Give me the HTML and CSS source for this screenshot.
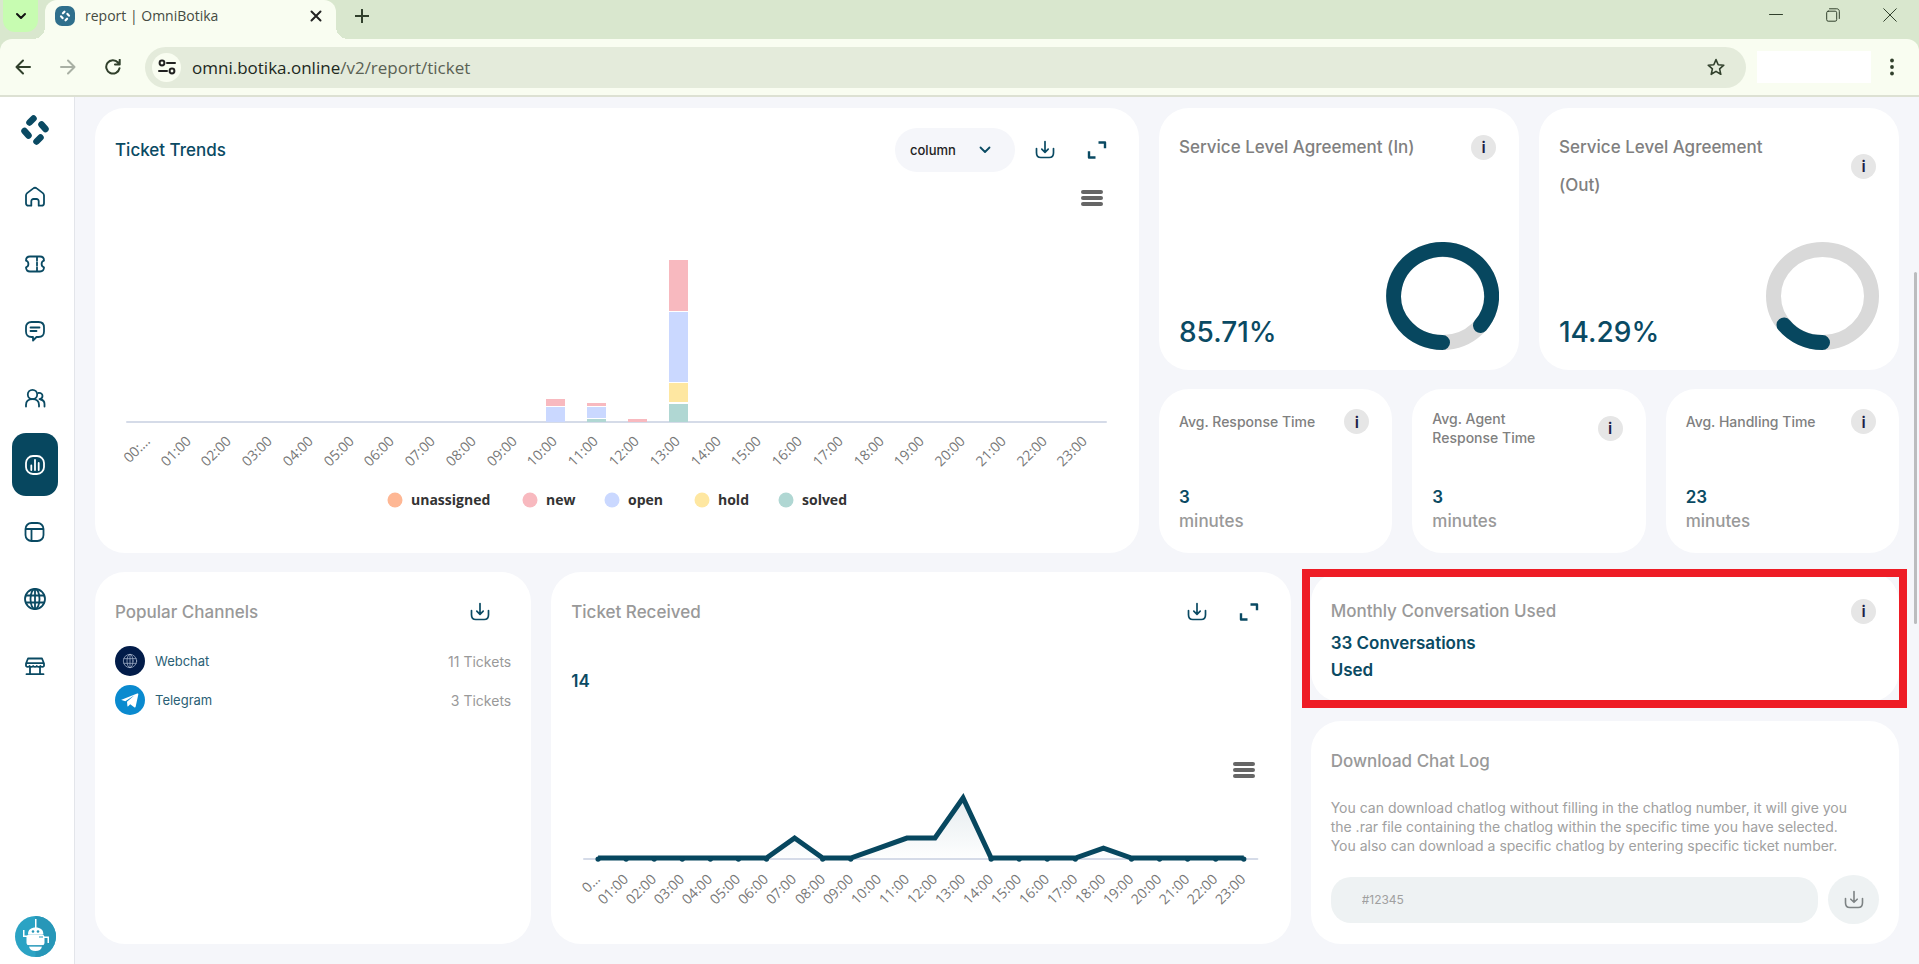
FILE: index.html
```html
<!DOCTYPE html>
<html lang="en">
<head>
<meta charset="utf-8">
<title>report | OmniBotika</title>
<link rel="stylesheet" href="styles.css">
</head>
<body>
<svg class="sprite" aria-hidden="true">
  <symbol id="download" viewBox="0 0 20 20"><path d="M10 1.500v10.500M6.800 9.200 10 12.300l3.200-3.100M1.500 8.500v4.200c0 3 1.300 4.800 4.300 4.800h8.400c3 0 4.300-1.800 4.300-4.800V8.500"/></symbol>
  <symbol id="expand" viewBox="0 0 20 20"><path d="M11.500 2.500H18v5.800M2 11.200v6.300h6.500"/></symbol>
  <symbol id="brand" viewBox="0 0 32 32"><path d="M10.500 8.500 14.500 4.500M22.500 10.500l4 4.500M21.500 23.500l-4 4M9.500 21.500l-4-4.500"/></symbol>
  <symbol id="globe" viewBox="0 0 24 24"><circle cx="12" cy="12" r="10"/><ellipse cx="12" cy="12" rx="4.500" ry="10"/><path d="M3 8.500h18M3 15.500h18M12 2v20"/></symbol>
</svg>
<header class="browser">
  <div class="tabstrip">
    <button class="tabsearch" aria-label="Search tabs"><svg width="14" height="14" viewBox="0 0 14 14"><path d="m3 5 4 4 4-4"/></svg></button>
    <div class="tab">
      <span class="favicon"><svg viewBox="0 0 32 32"><use href="#brand"/></svg></span>
      <span class="tab-title">report | OmniBotika</span>
      <button class="plain" aria-label="Close tab"><svg width="12" height="12" viewBox="0 0 12 12"><path d="m1.500 1.500 9 9m0-9-9 9"/></svg></button>
    </div>
    <button class="plain newtab" aria-label="New tab"><svg width="14" height="14" viewBox="0 0 14 14"><path d="M7 .500v13M.500 7h13"/></svg></button>
    <div class="window-controls">
      <button class="plain" aria-label="Minimize"><svg width="14" height="14" viewBox="0 0 14 14"><path d="M.500 6.500h13"/></svg></button>
      <button class="plain" aria-label="Restore"><svg width="14" height="14" viewBox="0 0 14 14"><rect x=".700" y="3.200" width="10" height="10" rx="1.500"/><path d="M3.500 .800h7.300c1.500 0 2.500 1 2.500 2.500v7.200"/></svg></button>
      <button class="plain" aria-label="Close"><svg width="14" height="14" viewBox="0 0 14 14"><path d="m.700.700 12.600 12.600m0-12.600L.700 13.300"/></svg></button>
    </div>
  </div>
  <div class="toolbar">
    <div class="navs">
      <button class="plain" aria-label="Back"><svg width="16" height="16" viewBox="0 0 16 16"><path d="M15 8H1.500M8 1.500 1.500 8 8 14.500"/></svg></button>
      <button class="plain faded" aria-label="Forward"><svg width="16" height="16" viewBox="0 0 16 16"><path d="M1 8h13.500M8 1.500 14.500 8 8 14.500"/></svg></button>
      <button class="plain" aria-label="Reload"><svg width="16" height="16" viewBox="0 0 16 16"><path d="M14.500 9.200A6.700 6.700 0 1 1 13 3.500L14.700 5.300M14.700 .800v4.800H10"/></svg></button>
    </div>
    <div class="address">
      <button class="siteinfo" aria-label="Site information"><svg width="18" height="16" viewBox="0 0 18 16"><circle cx="4" cy="4" r="2.400"/><path d="M9 4h8M1 12h8"/><circle cx="14" cy="12" r="2.400"/></svg></button>
      <span class="url">omni.botika.online<span>/v2/report/ticket</span></span>
      <button class="plain" aria-label="Bookmark"><svg width="20" height="20" viewBox="0 0 20 20"><path d="m10 2.600 2.200 5.100 5.600.5-4.200 3.700 1.200 5.400-4.800-2.900-4.800 2.900 1.200-5.400-4.200-3.700 5.600-.5z"/></svg></button>
    </div>
    <div class="extension"></div>
    <button class="plain more" aria-label="Menu"><svg width="6" height="18" viewBox="0 0 6 18"><circle cx="3" cy="2.500" r="1.900"/><circle cx="3" cy="9" r="1.900"/><circle cx="3" cy="15.500" r="1.900"/></svg></button>
  </div>
</header>
<div class="app">
  <nav class="sidebar">
    <a class="logo" href="#" aria-label="OmniBotika"><svg width="32" height="32"><use href="#brand"/></svg></a>
    <a href="#" aria-label="Home"><svg width="22" height="22" viewBox="0 0 22 22"><path d="M2 9.500c0-1 .4-1.800 1.100-2.400L9.300 2.400a2.700 2.700 0 0 1 3.400 0l6.200 4.700c.7.600 1.100 1.400 1.100 2.400v7.700c0 1.600-1 2.500-2.500 2.500h-2.800v-4.500a2.200 2.200 0 0 0-2.200-2.200h-3a2.200 2.200 0 0 0-2.200 2.200v4.500H4.500C3 19.700 2 18.800 2 17.200z"/></svg></a>
    <a href="#" aria-label="Tickets"><svg width="22" height="22" viewBox="0 0 22 22"><path d="M2 7.700C2 4.700 3.500 3.500 6 3.500h10c2.500 0 4 1.200 4 4.200-3.200.8-3.200 5.800 0 6.600 0 3-1.500 4.200-4 4.200H6c-2.500 0-4-1.200-4-4.200 3.200-.8 3.200-5.800 0-6.600z"/><path d="M13 4v3.500M13 9.500v3M13 14.500v3.500"/></svg></a>
    <a href="#" aria-label="Chat"><svg width="22" height="22" viewBox="0 0 22 22"><path d="M7.500 2h7C18 2 20 4 20 7.500v4c0 3.500-2 5.500-5.500 5.500h-2L9 20.500V17H7.500C4 17 2 15 2 11.500v-4C2 4 4 2 7.500 2z"/><path d="M6.500 7.500h9M6.500 11h6"/></svg></a>
    <a href="#" aria-label="Contacts"><svg width="22" height="22" viewBox="0 0 22 22"><circle cx="8.500" cy="7.500" r="4.700"/><path d="M2 19.500v-1.500c0-3.800 2.500-5.800 6.500-5.800s6.500 2 6.500 5.800v1.500M14.500 6c2.500-.3 4 1 4 3s-1.500 3-3 3.200M16.500 12.500c2.500.4 4 1.800 4 4.500v2.500"/></svg></a>
    <a class="active" href="#" aria-label="Report"><svg width="22" height="22" viewBox="0 0 22 22"><rect x="2" y="2" width="18" height="18" rx="7"/><path d="M7.300 11.500V16M11 6v10M14.700 9v7"/></svg></a>
    <a href="#" aria-label="Layout"><svg width="22" height="22" viewBox="0 0 22 22"><rect x="1.500" y="2" width="18" height="18" rx="6"/><path d="M2 8h17M7.500 8v11.500"/></svg></a>
    <a href="#" aria-label="Web"><svg width="24" height="24"><use href="#globe"/></svg></a>
    <a href="#" aria-label="Store"><svg width="22" height="22" viewBox="0 0 22 22"><path d="M4 3.500h14l2 5v2.500c-1 1.200-2.500 1.200-3.600 0-1.100 1.200-2.500 1.200-3.600 0-1.100 1.200-2.500 1.200-3.600 0-1.100 1.200-2.500 1.200-3.600 0-1.100 1.200-2.600 1.200-3.600 0V8.500zM2.500 8.200h17M6 12v7M16 12v7M2.500 19.200h17"/></svg></a>
    <a class="avatar" href="#" aria-label="Account"><svg width="41" height="41" viewBox="0 0 41 41"><circle cx="20.500" cy="20.500" r="20.500" fill="#2ba3c4"/><path d="M20.500 0a20.500 20.500 0 0 1 0 41z" fill="#2797b8"/><g fill="#fff"><path d="M20 3h1.500v9H20zM13 18.500c0-5 3-7 7.700-7s7.700 2 7.700 7z"/><rect x="11.500" y="18.500" width="18" height="11" rx="3"/><path d="M14 30.500h13c-.5 3-3 4.500-6.500 4.500S14.500 33.500 14 30.500z"/><path d="M8 14h1.500v5.500h2.500V21H8zM29 20.500h5V27h-1.500v-5H29z"/></g><g fill="#2797b8"><circle cx="18" cy="15.500" r="1.300"/><circle cx="23" cy="15.500" r="1.300"/><path d="M24 20.500h4v1h-4zM13 29.200h15v1H13z"/></g></svg></a>
  </nav>
  <main class="content">
    <div class="row top">
      <section class="card trends">
        <div class="head">
          <h2 class="title dark">Ticket Trends</h2>
          <div class="tools">
            <label class="picker"><select aria-label="Chart type"><option>column</option></select><svg width="12" height="8" viewBox="0 0 12 8"><path d="m1.500 1.500 4.500 4.500 4.500-4.500"/></svg></label>
            <button class="tool" aria-label="Download"><svg width="20" height="20"><use href="#download"/></svg></button>
            <button class="tool" aria-label="Full screen"><svg class="thick" width="20" height="20"><use href="#expand"/></svg></button>
          </div>
        </div>
        <button class="burger" aria-label="Chart menu"><i></i><i></i><i></i></button>
        <svg class="chart" id="trends" viewBox="115 206 1004 327" role="img" aria-label="Ticket trends"></svg>
      </section>
      <div class="metrics">
        <section class="card sla">
          <div class="head"><h2 class="title mid">Service Level Agreement (In)</h2><button class="info" aria-label="Info">i</button></div>
          <div class="result"><strong>85.71%</strong>
            <svg width="113" height="108" viewBox="0 0 113 108"><ellipse class="track" cx="56.500" cy="54" rx="49" ry="46.500"/><path class="arc" d="M56.500 100.500A49 46.500 0 1 1 94.500 83.500"/></svg>
          </div>
        </section>
        <section class="card sla">
          <div class="head"><h2 class="title mid">Service Level Agreement (Out)</h2><button class="info" aria-label="Info">i</button></div>
          <div class="result"><strong>14.29%</strong>
            <svg width="113" height="108" viewBox="0 0 113 108"><ellipse class="track" cx="56.500" cy="54" rx="49" ry="46.500"/><path class="arc" d="M56.500 100.500A49 46.500 0 0 1 18 83"/></svg>
          </div>
        </section>
        <section class="card avg">
          <div class="head"><h3>Avg. Response Time</h3><button class="info" aria-label="Info">i</button></div>
          <p class="value"><strong>3</strong><span>minutes</span></p>
        </section>
        <section class="card avg">
          <div class="head"><h3>Avg. Agent Response Time</h3><button class="info" aria-label="Info">i</button></div>
          <p class="value"><strong>3</strong><span>minutes</span></p>
        </section>
        <section class="card avg">
          <div class="head"><h3>Avg. Handling Time</h3><button class="info" aria-label="Info">i</button></div>
          <p class="value"><strong>23</strong><span>minutes</span></p>
        </section>
      </div>
    </div>
    <div class="row bottom">
      <section class="card channels">
        <div class="head"><h2 class="title">Popular Channels</h2><button class="tool" aria-label="Download"><svg width="20" height="20"><use href="#download"/></svg></button></div>
        <ul>
          <li><span class="channel web"><svg width="16" height="16"><use href="#globe"/></svg></span><a href="#">Webchat</a><span class="count">11 Tickets</span></li>
          <li><span class="channel telegram"><svg width="30" height="30" viewBox="0 0 30 30"><path d="M6.500 14.800 22.200 8.500c.8-.3 1.300.2 1.100 1.100l-2.600 12c-.2.900-.8 1-1.500.6l-4-2.900-2 2c-.4.300-.8.200-.8-.3l-.4-4.200 7.500-6.500-9.200 5.900-3.800-1.200c-.5-.1-.5-.4 0-.2z"/></svg></span><a href="#">Telegram</a><span class="count">3 Tickets</span></li>
        </ul>
      </section>
      <section class="card received">
        <div class="head"><h2 class="title">Ticket Received</h2>
          <div class="tools">
            <button class="tool" aria-label="Download"><svg width="20" height="20"><use href="#download"/></svg></button>
            <button class="tool" aria-label="Full screen"><svg class="thick" width="20" height="20"><use href="#expand"/></svg></button>
          </div>
        </div>
        <strong class="total">14</strong>
        <button class="burger" aria-label="Chart menu"><i></i><i></i><i></i></button>
        <svg class="chart" id="received" viewBox="571 778 699 146" role="img" aria-label="Tickets received"></svg>
      </section>
      <div class="stack">
        <section class="card monthly">
          <div class="head"><h2 class="title">Monthly Conversation Used</h2><button class="info" aria-label="Info">i</button></div>
          <p class="used">33 Conversations<br>Used</p>
        </section>
        <section class="card chatlog">
          <h2 class="title">Download Chat Log</h2>
          <p>You can download chatlog without filling in the chatlog number, it will give you<br>the .rar file containing the chatlog within the specific time you have selected.<br>You also can download a specific chatlog by entering specific ticket number.</p>
          <form class="search">
            <input type="text" placeholder="#12345" aria-label="Ticket number">
            <button type="button" aria-label="Download chat log"><svg width="20" height="20"><use href="#download"/></svg></button>
          </form>
        </section>
      </div>
    </div>
  </main>
  <div class="scroll-thumb"></div>
</div>
<script src="charts.js"></script>
</body>
</html>
```
FILE: styles.css
```css
* { box-sizing: border-box; }
body { margin: 0; min-height: 100vh; display: flex; flex-direction: column; font-family: Inter, "Liberation Sans", sans-serif; background: #f5f6fa; color: #0a4a63; }
h2, h3, p, ul { margin: 0; padding: 0; font-weight: 500; }
ul { list-style: none; }
a { color: inherit; text-decoration: none; }
button { border: 0; padding: 0; background: none; color: inherit; font: inherit; display: flex; align-items: center; justify-content: center; flex: none; }
svg { display: block; flex: none; fill: none; stroke: currentColor; stroke-linecap: round; stroke-linejoin: round; }
.sprite { position: absolute; width: 0; height: 0; }

/* browser frame */
.browser { background: #d9e7ce; color: #31402c; font-family: "Open Sans", "Noto Sans", sans-serif; }
.browser svg { stroke-width: 2; }
.tabstrip { display: flex; height: 39px; padding-left: 3px; }
.tabsearch { width: 35px; height: 32px; border-radius: 0 0 12px 12px; background: #c7fcb1; color: #111; }
.tab { display: flex; align-items: center; width: 291px; height: 39px; margin-left: 7px; padding: 0 14px 8px 10px; border-radius: 12px 12px 0 0; background: #f9fdf1; color: #222; position: relative; }
.tab::before, .tab::after { content: ""; position: absolute; bottom: 0; width: 12px; height: 12px; }
.tab::before { left: -12px; background: radial-gradient(circle at 0 0, transparent 12px, #f9fdf1 12px); }
.tab::after { right: -12px; background: radial-gradient(circle at 100% 0, transparent 12px, #f9fdf1 12px); }
.favicon { width: 20px; height: 20px; padding: 4px; border-radius: 7px; background: #2f6f8c; color: #fff; }
.favicon svg { stroke-width: 6; }
.tab-title { flex: 1; margin-left: 10px; font-size: 14px; color: #454b42; }
.newtab { width: 14px; margin: 0 0 8px 19px; }
.window-controls { display: flex; gap: 43px; margin-left: auto; padding: 0 22px 10px 0; }
.window-controls svg { stroke-width: 1; }
.toolbar { display: flex; align-items: center; height: 58px; padding: 2px 24px 2px 15px; border-bottom: 2px solid #dde1d3; border-radius: 12px 12px 0 0; background: #f9fdf1; }
.navs { display: flex; gap: 29px; width: 130px; }
.faded { color: #a9b0a4; }
.address { flex: 1; display: flex; align-items: center; height: 41px; margin-right: 11px; padding: 0 20px 0 7px; border-radius: 21px; background: #e4ebdb; }
.siteinfo { width: 29px; height: 29px; border-radius: 50%; background: #f9fdf1; color: #222; }
.url { flex: 1; margin-left: 11px; font-size: 17px; color: #20281d; }
.url span { color: #5a6154; }
.address .plain svg { stroke-width: 1.6; }
.extension { width: 114px; height: 32px; margin-right: 18px; background: #fff; }
.more svg { fill: currentColor; stroke: none; }

/* application shell */
.app { flex: 1; display: flex; position: relative; }
.scroll-thumb { position: absolute; right: 2px; top: 175px; width: 3px; height: 352px; border-radius: 2px; background: #bbbcbe; }
.sidebar { width: 75px; flex: none; display: flex; flex-direction: column; align-items: center; gap: 4px; padding: 17px 4px 7px 0; border-right: 1px solid #e3e5ea; background: #fff; }
.sidebar a { width: 46px; height: 63px; border-radius: 14px; display: flex; align-items: center; justify-content: center; }
.sidebar svg { stroke-width: 1.8; }
.sidebar .logo { height: 32px; margin-bottom: 15px; }
.sidebar .logo svg { stroke-width: 6.5; }
.sidebar .active { background: #07475f; color: #fff; }
.sidebar .avatar { margin-top: auto; height: 41px; }
.avatar svg { stroke: none; }
.content { flex: 1; min-width: 0; display: flex; flex-direction: column; gap: 19px; padding: 11px 20px 20px; }
.row { display: grid; gap: 20px; }
.top { grid-template-columns: minmax(0, 1044fr) minmax(0, 740fr); }
.bottom { grid-template-columns: minmax(0, 436fr) minmax(0, 739fr) minmax(0, 588fr); flex: 1; }
.card { background: #fff; border-radius: 30px; padding: 20px; display: flex; flex-direction: column; }
.head { display: flex; align-items: center; justify-content: space-between; }
.title { font-size: 17px; line-height: 38px; color: #999; }
.dark { color: #0a4a63; }
.mid, .avg h3 { color: #808080; }
.tools { display: flex; align-items: center; gap: 8px; }
.tool { width: 44px; height: 40px; }
.tool svg { stroke-width: 1.7; }
.tool .thick { stroke-width: 2.4; stroke-linecap: butt; }
.info { width: 25px; height: 25px; margin-right: 3px; border-radius: 50%; background: #e6e6e6; color: #1b2148; font-size: 16px; font-weight: 600; line-height: 24px; }
.picker { display: flex; align-items: center; width: 120px; height: 44px; padding: 0 24px 0 15px; border-radius: 22px; background: #f5f6fa; }
.picker select { flex: 1; min-width: 0; border: 0; padding: 0; appearance: none; background: none; font: 500 13px Inter, sans-serif; color: #222; }
.picker svg { stroke-width: 1.8; }
.burger { width: 22px; height: 16px; margin: 18px 16px 0 auto; flex-direction: column; justify-content: space-between; }
.burger i { width: 22px; height: 4px; border-radius: 2px; background: #666; }

/* charts */
.chart { width: 100%; stroke: none; font-family: "Open Sans", "Noto Sans", sans-serif; font-size: 14px; }
.chart .tick { fill: #777; text-anchor: end; }
.chart .legend { fill: #333; font-weight: 700; }
.chart .axis { stroke: #d5dbe8; stroke-width: 2; }
.chart .line { stroke: #07475f; stroke-width: 5; stroke-linejoin: miter; stroke-linecap: butt; }
.chart .dot { fill: #07475f; }
.unassigned { fill: #feb794; }
.new { fill: #f8b9bf; }
.open { fill: #cad8ff; }
.hold { fill: #fee7a1; }
.solved { fill: #b0d7d3; }

/* metric cards */
.metrics { display: grid; grid-template-columns: repeat(6, minmax(0, 1fr)); grid-template-rows: 262fr 164fr; gap: 19px 20px; }
.sla { grid-column: span 3; justify-content: space-between; }
.avg { grid-column: span 2; justify-content: space-between; }
.sla .title { max-width: 242px; }
.result { display: flex; justify-content: space-between; align-items: flex-end; }
.result strong { font-size: 28px; font-weight: 500; line-height: 36px; }
.result svg { stroke-width: 15; }
.track { stroke: #d9d9d9; }
.arc { stroke: #07475f; }
.avg h3 { font-size: 14px; line-height: 19px; max-width: 140px; }
.value { display: flex; flex-direction: column; font-size: 17px; line-height: 24px; color: #999; }
.value strong, .total, .used { font-size: 17px; font-weight: 600; color: #0a4a63; }

/* channels */
.channels .head, .received .head { height: 40px; }
.channels .tool { margin-right: 9px; }
.channels ul { display: flex; flex-direction: column; gap: 9px; margin-top: 14px; }
.channels li { display: flex; align-items: center; gap: 10px; font-size: 13px; font-weight: 400; color: #2a6075; }
.channel { width: 30px; height: 30px; border-radius: 50%; display: flex; align-items: center; justify-content: center; }
.web { background: #021c49; color: #b8c4da; }
.telegram { background: #0a8acf; }
.telegram svg { fill: #fff; stroke: none; }
.count { margin-left: auto; font-size: 14px; color: #999; }
.total { margin-top: 37px; line-height: 24px; }
.received .burger { margin-top: 69px; }

/* conversations */
.stack { display: flex; flex-direction: column; gap: 19px; }
.monthly { position: relative; padding-bottom: 18px; }
.monthly::after { content: ""; position: absolute; inset: -3px -8px -6px -9px; border: 8px solid #ee1c25; pointer-events: none; }
.used { line-height: 27px; }
.chatlog { flex: 1; }
.chatlog .title { line-height: 40px; }
.chatlog p { margin-top: 17px; font-size: 14px; line-height: 19px; font-weight: 400; color: #a0a0a0; }
.search { display: flex; align-items: center; gap: 10px; margin-top: auto; }
.search input { flex: 1; min-width: 0; height: 46px; padding: 0 31px; border: 0; border-radius: 20px; background: #eef2f3; font: 12px Inter, sans-serif; color: #555; }
.search input::placeholder { color: #a0a0a0; }
.search button { width: 51px; height: 49px; border-radius: 50%; background: #eef2f3; color: #7d8384; }
.search svg { stroke-width: 1.6; }
```
FILE: charts.js
```js
const NS = "http://www.w3.org/2000/svg";

function add(parent, tag, attrs, text) {
  const node = document.createElementNS(NS, tag);
  for (const key in attrs) node.setAttribute(key, attrs[key]);
  if (text) node.textContent = text;
  parent.appendChild(node);
  return node;
}

function ticks(svg, center, y, first) {
  for (let i = 0; i < 24; i++) {
    const label = i === 0 ? first : String(i).padStart(2, "0") + ":00";
    add(svg, "text", { class: "tick", transform: `translate(${Math.round(center(i)) + 3} ${y}) rotate(-45)` }, label);
  }
}

// stacked columns: [hour, series, top, height]
const trends = document.getElementById("trends");
const column = i => 127.5 + 40.76 * (i + 0.5);
add(trends, "path", { class: "axis", d: "M127 422H1106" });
[
  [10, "new", 399, 7], [10, "open", 407, 15],
  [11, "new", 403, 3], [11, "open", 407, 11], [11, "solved", 419, 3],
  [12, "new", 419, 3],
  [13, "new", 260, 51], [13, "open", 312, 70], [13, "hold", 383, 19], [13, "solved", 404, 18]
].forEach(([hour, name, y, height]) =>
  add(trends, "rect", { class: name, x: Math.round(column(hour) - 9), y, width: 19, height }));
ticks(trends, column, 442, "00:…");
[["unassigned", 395], ["new", 530], ["open", 612], ["hold", 702], ["solved", 786]].forEach(([name, x]) => {
  add(trends, "circle", { class: name, cx: x, cy: 500, r: 7.5 });
  add(trends, "text", { class: "legend", x: x + 16, y: 505 }, name);
});

// tickets per hour
const received = document.getElementById("received");
const hour = i => 584 + 28.06 * (i + 0.5);
const counts = [0, 0, 0, 0, 0, 0, 0, 2, 0, 0, 1, 2, 2, 6, 0, 0, 0, 0, 1, 0, 0, 0, 0, 0];
const points = counts.map((n, i) => `${hour(i)},${858 - n * 10}`).join(" ");
const gradient = add(add(received, "defs", {}), "linearGradient", { id: "fade", x1: 0, y1: 0, x2: 0, y2: 1 });
add(gradient, "stop", { offset: 0, "stop-color": "#e6ecef" });
add(gradient, "stop", { offset: 1, "stop-color": "#fdfefe" });
add(received, "path", { class: "axis", d: "M584 859H1257" });
add(received, "polygon", { fill: "url(#fade)", points: `${hour(0)},858 ${points} ${hour(23)},858` });
add(received, "polyline", { class: "line", points });
counts.forEach((n, i) => { if (!n) add(received, "circle", { class: "dot", cx: hour(i), cy: 859, r: 2.6 }); });
ticks(received, hour, 880, "0…");
```
